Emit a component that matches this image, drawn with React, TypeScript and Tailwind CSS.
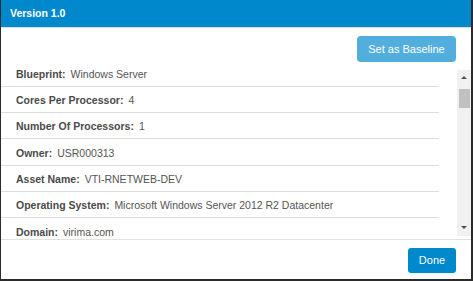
const rows = [
  { label: 'Blueprint', value: 'Windows Server' },
  { label: 'Cores Per Processor', value: '4' },
  { label: 'Number Of Processors', value: '1' },
  { label: 'Owner', value: 'USR000313' },
  { label: 'Asset Name', value: 'VTI-RNETWEB-DEV' },
  { label: 'Operating System', value: 'Microsoft Windows Server 2012 R2 Datacenter' },
  { label: 'Domain', value: 'virima.com' },
  { label: 'Manufacturer', value: 'VMware, Inc.' },
];

export default function App() {
  return (
    <div className="w-[473px] h-[281px] flex flex-col bg-white border-l border-r-2 border-b-2 border-[#2b2b2b] font-['Liberation_Sans',Arial,sans-serif] overflow-hidden">
      <div className="h-[27px] shrink-0 bg-[#0088cc] flex items-center pl-[9px] pt-[1px]">
        <span className="text-white font-bold text-[10.5px]">Version 1.0</span>
      </div>
      <div className="h-px shrink-0 bg-[#dcdcdc]" />

      <div className="flex justify-end pt-[8px] pb-[8px] pr-[15px] shrink-0">
        <button className="w-[99px] h-[26px] rounded-[4px] bg-[#52afdd] text-white text-[11px]">
          Set as Baseline
        </button>
      </div>

      <div className="h-[167px] shrink-0 flex">
        <div className="w-[438px] overflow-hidden">
          <div className="-mt-[9.6px]">
            {rows.map((r) => (
              <div
                key={r.label}
                className="h-[26.3px] border-b border-[#dddddd] flex items-center pl-[15px] pt-[2px] text-[10.5px] leading-none text-[#555]"
              >
                <span className="font-bold text-[#4a4a4a]">{r.label}:</span>
                <span className="ml-[5px]">{r.value}</span>
              </div>
            ))}
          </div>
        </div>
        <div className="flex-1" />
        {/* scrollbar */}
        <div className="w-[14px] h-[166px] bg-[#f1f1f1] flex flex-col items-center">
          <div className="h-[14px] flex items-center justify-center">
            <div className="w-0 h-0 border-l-[3.5px] border-r-[3.5px] border-b-[3.5px] border-l-transparent border-r-transparent border-b-[#505050]" />
          </div>
          <div className="mt-[5px] w-[11px] h-[19px] ml-[1px] bg-[#c1c1c1]" />
          <div className="flex-1" />
          <div className="h-[10px] flex items-start justify-center">
            <div className="w-0 h-0 border-l-[3.5px] border-r-[3.5px] border-t-[3.5px] border-l-transparent border-r-transparent border-t-[#505050]" />
          </div>
        </div>
      </div>

      <div className="h-[2px] shrink-0" />
      <div className="h-px shrink-0 bg-[#e2e2e2]" />

      <div className="flex-1 flex justify-end items-start pt-[8px] pr-[15px]">
        <button className="w-[48px] h-[25px] rounded-[3px] bg-[#0088cc] text-white text-[11px]">
          Done
        </button>
      </div>
    </div>
  );
}
